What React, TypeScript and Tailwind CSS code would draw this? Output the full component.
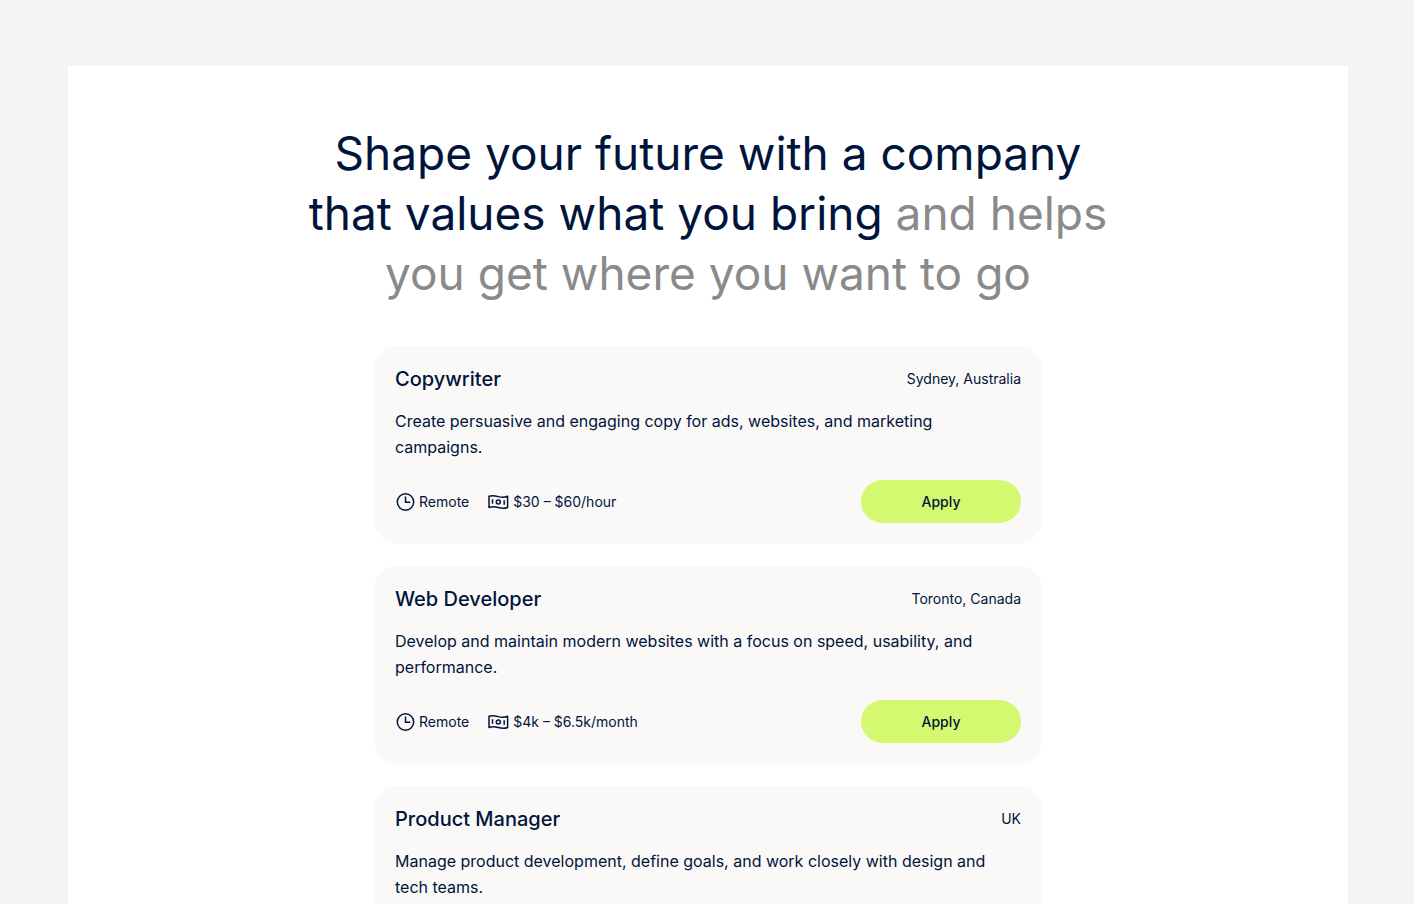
import React from "react";

interface Job {
  title: string;
  location: string;
  description: string;
  type: string;
  salary: string;
}

const jobs: Job[] = [
  {
    title: "Copywriter",
    location: "Sydney, Australia",
    description:
      "Create persuasive and engaging copy for ads, websites, and marketing campaigns.",
    type: "Remote",
    salary: "$30 – $60/hour",
  },
  {
    title: "Web Developer",
    location: "Toronto, Canada",
    description:
      "Develop and maintain modern websites with a focus on speed, usability, and performance.",
    type: "Remote",
    salary: "$4k – $6.5k/month",
  },
  {
    title: "Product Manager",
    location: "UK",
    description:
      "Manage product development, define goals, and work closely with design and tech teams.",
    type: "Remote",
    salary: "$5k – $8k/month",
  },
];

const ClockIcon = () => (
  <svg
    className="size-5"
    viewBox="0 0 20 20"
    fill="none"
    stroke="currentColor"
    strokeWidth="1.5"
    aria-hidden="true"
  >
    <circle cx="10.5" cy="10" r="8.2" />
    <path d="M10.5 4.500v5.700h4.800" />
  </svg>
);

const CashIcon = () => (
  <svg
    className="h-5 w-[22px]"
    viewBox="0 0 22 20"
    fill="none"
    stroke="currentColor"
    strokeWidth="1.5"
    aria-hidden="true"
  >
    <path
      d="M2 4.300c3.200-1.400 6.200-.6 9.300.3s6.200.9 9.300-.3v11.200c-3.100 1.300-6.200.9-9.300 0s-6.100-1.300-9.300 0z"
      strokeLinejoin="round"
    />
    <circle cx="11.300" cy="10" r="2" />
    <path d="M5.500 7.200v4.600M17.200 8.200v4.600" />
  </svg>
);

const JobCard = ({ job }: { job: Job }) => (
  <article className="rounded-3xl bg-[#faf9f7] p-[21px]">
    <div className="flex items-center justify-between">
      <h2 className="text-xl leading-6 font-medium">{job.title}</h2>
      <p className="text-sm">{job.location}</p>
    </div>
    <p className="mt-[17px] pr-6 text-base leading-[26px]">
      {job.description}
    </p>
    <div className="mt-5 flex items-center justify-between">
      <div className="flex items-center gap-[18px] text-sm">
        <span className="flex items-center gap-1">
          <ClockIcon />
          {job.type}
        </span>
        <span className="flex items-center gap-1">
          <CashIcon />
          {job.salary}
        </span>
      </div>
      <button
        type="button"
        className="h-[43px] w-40 rounded-full bg-[#d4f971] text-sm font-medium"
      >
        Apply
      </button>
    </div>
  </article>
);

const App = () => {
  return (
    <div className="min-h-screen bg-[#f5f5f5] pt-[66px] pr-[66px] pl-[68px] font-['Inter',sans-serif] text-[#00143c]">
      <main className="bg-white px-6 pt-[57px] pb-16">
        <h1 className="mx-auto max-w-[840px] text-center text-[46px] leading-[60px]">
          Shape your future with a company that values what you bring{" "}
          <span className="text-[#8a8a8a]">
            and helps you get where you want to go
          </span>
        </h1>
        <section className="mx-auto mt-[43px] flex max-w-[668px] flex-col gap-[22px]">
          {jobs.map((job) => (
            <JobCard key={job.title} job={job} />
          ))}
        </section>
      </main>
    </div>
  );
};

export default App;
